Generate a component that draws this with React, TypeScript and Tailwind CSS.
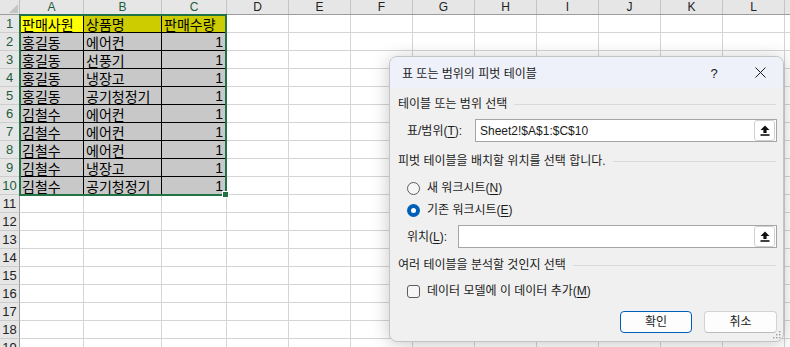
import React from 'react';

const COLS = [
  { key: 'A', w: 'w-[64px]' },
  { key: 'B', w: 'w-[78px]' },
  { key: 'C', w: 'w-[65px]' },
  { key: 'D', w: 'w-[62px]' },
  { key: 'E', w: 'w-[62px]' },
  { key: 'F', w: 'w-[62px]' },
  { key: 'G', w: 'w-[62px]' },
  { key: 'H', w: 'w-[62px]' },
  { key: 'I', w: 'w-[62px]' },
  { key: 'J', w: 'w-[62px]' },
  { key: 'K', w: 'w-[62px]' },
  { key: 'L', w: 'w-[62px]' },
  { key: 'M', w: 'w-[62px]' },
];

const DATA: [string, string, string][] = [
  ['판매사원', '상품명', '판매수량'],
  ['홍길동', '에어컨', '1'],
  ['홍길동', '선풍기', '1'],
  ['홍길동', '냉장고', '1'],
  ['홍길동', '공기청정기', '1'],
  ['김철수', '에어컨', '1'],
  ['김철수', '에어컨', '1'],
  ['김철수', '에어컨', '1'],
  ['김철수', '냉장고', '1'],
  ['김철수', '공기청정기', '1'],
];

const ROW_COUNT = 19;

function cellBg(r: number, c: number) {
  if (r === 0 && c === 0) return 'bg-[#ffff00]';
  if (r === 0) return 'bg-[#cccc00]';
  return 'bg-[#c8c8c8]';
}

const UploadArrow = () => (
  <svg width="10" height="11" viewBox="0 0 10 11">
    <path d="M5 0.5 L9.5 5 H6.6 V8 H3.4 V5 H0.5 Z" fill="#111" />
    <rect x="0.5" y="9.2" width="9" height="1.6" fill="#111" />
  </svg>
);

const RefButton = () => (
  <div className="flex h-[21px] w-[21px] items-center justify-center rounded-[3px] border border-[#d0d0d0] bg-white">
    <UploadArrow />
  </div>
);

const SectionHeading = ({ text }: { text: string }) => (
  <div className="flex h-[16px] items-center pl-[8px] pr-[7px]">
    <span className="whitespace-nowrap">{text}</span>
    <div className="ml-[7px] h-px flex-1 bg-[#d9d9d9]" />
  </div>
);

const Acc = ({ ch }: { ch: string }) => (
  <>
    (<span className="underline underline-offset-2">{ch}</span>)
  </>
);

function PivotDialog() {
  return (
    <div className="absolute left-[389px] top-[56px] flex h-[286px] w-[395px] flex-col overflow-hidden rounded-[8px] border border-[#c4c4c4] bg-[#f0f0f0] font-['Liberation_Sans','Noto_Sans_CJK_KR',sans-serif] text-[12px] leading-[16px] text-[#1b1b1b] shadow-[0_2px_18px_rgba(0,0,0,0.22)]">
      <div className="flex h-[31px] shrink-0 items-center bg-[#eef1fa] pl-[12px]">
        <span className="pt-[2px]">표 또는 범위의 피벗 테이블</span>
        <div className="ml-auto flex h-full">
          <div className="flex w-[46px] items-center justify-center pt-[2px] text-[13px]">?</div>
          <div className="flex w-[46px] items-center justify-center">
            <svg width="11" height="11" viewBox="0 0 11 11">
              <path d="M0.5 0.5 L10.5 10.5 M10.5 0.5 L0.5 10.5" stroke="#1b1b1b" strokeWidth="1" />
            </svg>
          </div>
        </div>
      </div>

      <div className="mt-[8px]">
        <SectionHeading text="테이블 또는 범위 선택" />
      </div>

      <div className="mt-[7px] flex items-center pl-[17px] pr-[6px]">
        <span className="w-[68px] whitespace-nowrap">
          표/범위<Acc ch="T" />:
        </span>
        <div className="flex h-[23px] flex-1 items-center justify-between border border-[#a5a5a5] bg-white pl-[4px] pr-[1px]">
          <span className="font-['Liberation_Sans',sans-serif]">Sheet2!$A$1:$C$10</span>
          <RefButton />
        </div>
      </div>

      <div className="mt-[11px]">
        <SectionHeading text="피벗 테이블을 배치할 위치를 선택 합니다." />
      </div>

      <div className="mt-[11px] flex h-[16px] items-center pl-[17px]">
        <div className="h-[13px] w-[13px] rounded-full border border-[#5c5c5c] bg-[#f6f6f6]" />
        <span className="ml-[7px]">
          새 워크시트<Acc ch="N" />
        </span>
      </div>

      <div className="mt-[6px] flex h-[16px] items-center pl-[17px]">
        <div className="flex h-[13px] w-[13px] items-center justify-center rounded-full bg-[#005fb8]">
          <div className="h-[5px] w-[5px] rounded-full bg-white" />
        </div>
        <span className="ml-[7px]">
          기존 워크시트<Acc ch="E" />
        </span>
      </div>

      <div className="mt-[7px] flex items-center pl-[17px] pr-[6px]">
        <span className="w-[51px] whitespace-nowrap">
          위치<Acc ch="L" />:
        </span>
        <div className="flex h-[23px] flex-1 items-center justify-end border border-[#a5a5a5] bg-white pr-[1px]">
          <RefButton />
        </div>
      </div>

      <div className="mt-[9px]">
        <SectionHeading text="여러 테이블을 분석할 것인지 선택" />
      </div>

      <div className="mt-[10px] flex h-[16px] items-center pl-[17px]">
        <div className="h-[13px] w-[13px] rounded-[3px] border border-[#5c5c5c] bg-[#f6f6f6]" />
        <span className="ml-[7px]">
          데이터 모델에 이 데이터 추가<Acc ch="M" />
        </span>
      </div>

      <div className="mt-[12px] flex justify-end gap-[12px] pr-[6px]">
        <button className="flex h-[22px] w-[72px] items-center justify-center rounded-[4px] border border-[#005fb8] bg-[#fdfdfd]">
          확인
        </button>
        <button className="flex h-[22px] w-[73px] items-center justify-center rounded-[4px] border border-[#d3d3d3] border-b-[#bcbcbc] bg-[#fdfdfd]">
          취소
        </button>
      </div>

      <svg className="absolute bottom-[2px] right-[2px]" width="8" height="8" viewBox="0 0 8 8">
        <rect x="6" y="0" width="1.4" height="1.4" fill="#9a9a9a" />
        <rect x="3" y="3" width="1.4" height="1.4" fill="#9a9a9a" />
        <rect x="6" y="3" width="1.4" height="1.4" fill="#9a9a9a" />
        <rect x="0" y="6" width="1.4" height="1.4" fill="#9a9a9a" />
        <rect x="3" y="6" width="1.4" height="1.4" fill="#9a9a9a" />
        <rect x="6" y="6" width="1.4" height="1.4" fill="#9a9a9a" />
      </svg>
    </div>
  );
}

export default function App() {
  return (
    <div className="relative h-[347px] w-[790px] overflow-hidden bg-white">
      {/* column headers */}
      <div className="flex h-[15px] border-b border-[#9c9c9c] bg-[#e6e6e6] font-['Liberation_Sans',sans-serif] text-[12px] leading-none">
        <div className="relative w-[20px] shrink-0 border-r border-[#bdbdbd]">
          <svg className="absolute bottom-[1px] right-[1px]" width="9" height="9" viewBox="0 0 9 9">
            <path d="M9 0 V9 H0 Z" fill="#c4c4c4" />
          </svg>
        </div>
        {COLS.map((c, i) => (
          <div
            key={c.key}
            className={`${c.w} flex shrink-0 items-center justify-center border-r border-[#c4c4c4] ${i < 3 ? 'text-[#1d5c40]' : 'text-[#222]'}`}
          >
            {c.key}
          </div>
        ))}
      </div>

      {Array.from({ length: ROW_COUNT }, (_, r) => {
        const data = DATA[r];
        return (
          <div key={r} className="flex h-[18px]">
            <div
              className={`flex w-[20px] shrink-0 items-center justify-center border-r border-b border-r-[#9c9c9c] border-b-[#cdcdcd] bg-[#e6e6e6] font-['Liberation_Sans',sans-serif] text-[13px] leading-[15px] ${data ? 'text-[#1d5c40]' : 'text-[#222]'}`}
            >
              {r + 1}
            </div>
            {COLS.map((c, ci) => {
              if (data && ci < 3) {
                const isNum = ci === 2 && r > 0;
                return (
                  <div
                    key={c.key}
                    className={`${c.w} ${cellBg(r, ci)} flex shrink-0 items-center overflow-hidden whitespace-nowrap border-r border-b border-black leading-[16px] ${
                      isNum
                        ? "justify-end pr-[3px] font-['Liberation_Sans',sans-serif] text-[14px]"
                        : "pl-[2px] font-['Noto_Sans_CJK_KR',sans-serif] text-[14px]"
                    } text-black`}
                  >
                    {data[ci]}
                  </div>
                );
              }
              return <div key={c.key} className={`${c.w} shrink-0 border-r border-b border-[#d4d4d4]`} />;
            })}
          </div>
        );
      })}

      {/* selection outline */}
      <div className="pointer-events-none absolute left-[19px] top-[14px] h-[182px] w-[208px] border-2 border-[#217346]" />
      <div className="absolute left-[222px] top-[191px] h-[7px] w-[7px] border border-white bg-[#217346]" />

      <PivotDialog />
    </div>
  );
}
